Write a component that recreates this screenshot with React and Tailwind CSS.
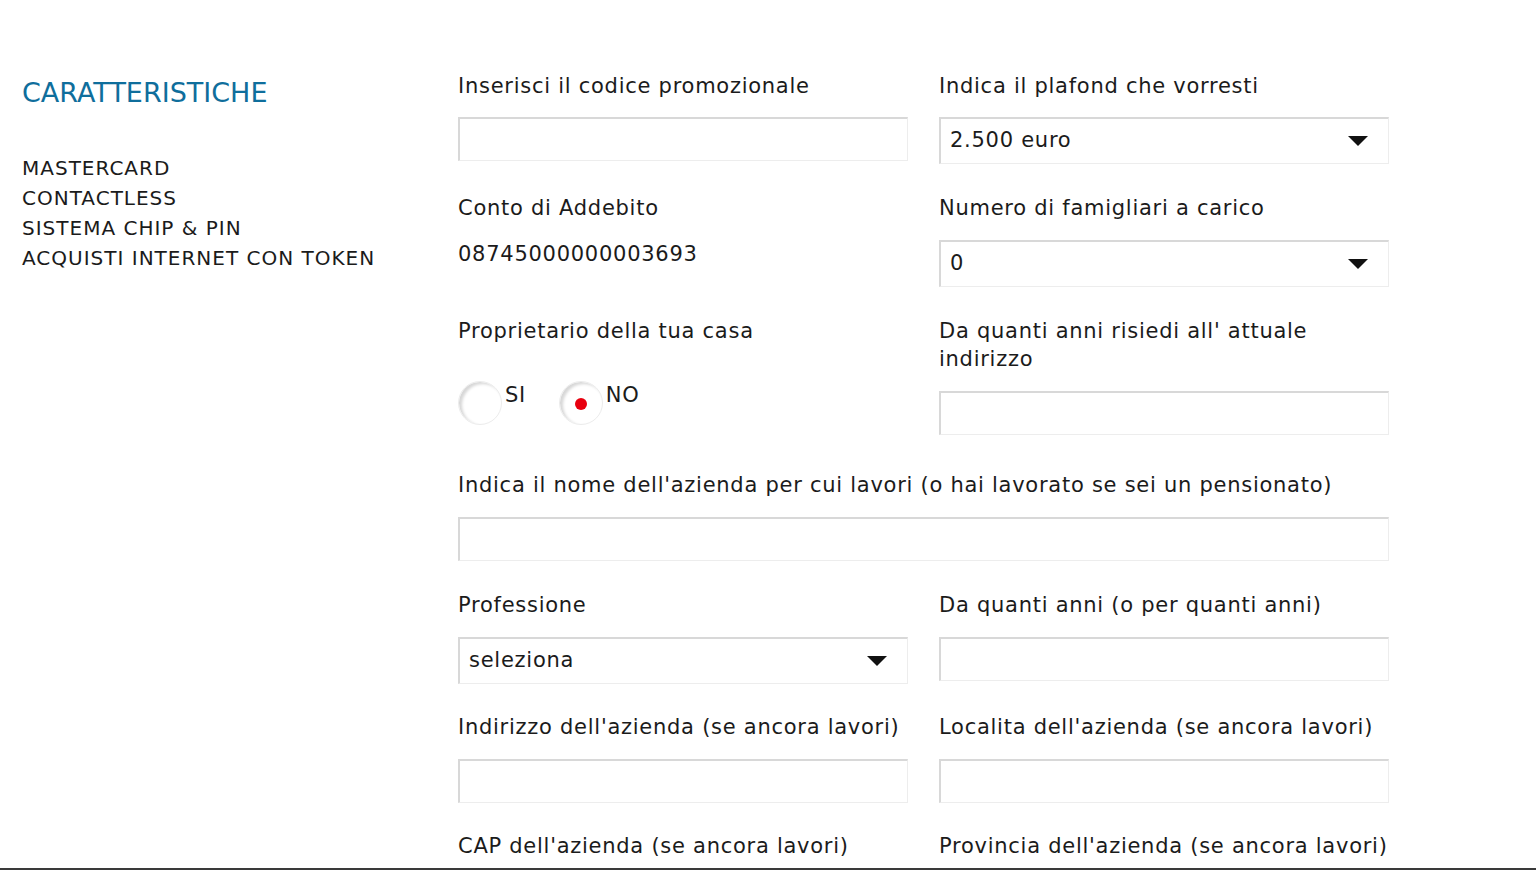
import React from "react";

const font = { fontFamily: '"DejaVu Sans", Verdana, sans-serif' };

function Label({ children, className = "" }) {
  return (
    <div className={`whitespace-nowrap text-[21px] leading-[28px] tracking-[0.035em] text-[#1b1b1b] ${className}`}>
      {children}
    </div>
  );
}

function TextBox({ className = "" }) {
  return (
    <div
      className={`h-[44px] bg-white border-t-2 border-l-2 border-r border-b border-t-[#d8d8d8] border-l-[#d8d8d8] border-r-[#ededed] border-b-[#ededed] ${className}`}
    />
  );
}

function SelectBox({ value }) {
  return (
    <div className="h-[47px] flex items-center justify-between pl-[9px] pr-[20px] bg-white border-t-2 border-l-2 border-r border-b border-t-[#d8d8d8] border-l-[#d8d8d8] border-r-[#ededed] border-b-[#ededed]">
      <span className="text-[21px] tracking-[0.035em] text-[#1b1b1b]">{value}</span>
      <svg width="20" height="10" viewBox="0 0 20 10">
        <path d="M0 0H20L10 10Z" fill="#111" />
      </svg>
    </div>
  );
}

function Radio({ label, checked }) {
  return (
    <div className="flex items-start">
      <div className="w-[44px] h-[44px] rounded-full bg-white border border-[#ececec] shadow-[inset_3px_2px_3px_rgba(0,0,0,0.16)] flex items-center justify-center">
        {checked && <div className="w-[12px] h-[12px] rounded-full bg-[#e8000f] translate-y-[1px]" />}
      </div>
      <span className="ml-[3px] text-[21px] leading-[28px] tracking-[0.03em] text-[#1b1b1b]">{label}</span>
    </div>
  );
}

export default function App() {
  return (
    <div className="h-[872px] w-full bg-white flex flex-col overflow-hidden" style={font}>
      <div className="flex-1 flex overflow-hidden">
        <aside className="w-[458px] shrink-0 pl-[22px] pt-[77px]">
          <h2 className="text-[27px] leading-[32px] text-[#0f6e9c]">CARATTERISTICHE</h2>
          <ul className="mt-[44px] text-[20px] leading-[30px] tracking-[0.05em] text-[#1b1b1b]">
            <li>MASTERCARD</li>
            <li>CONTACTLESS</li>
            <li>SISTEMA CHIP &amp; PIN</li>
            <li>ACQUISTI INTERNET CON TOKEN</li>
          </ul>
        </aside>

        <main className="w-[931px] pt-[72px]">
          <div className="grid grid-cols-[450px_450px] gap-x-[31px]">
            <div>
              <Label>Inserisci il codice promozionale</Label>
              <TextBox className="mt-[17px]" />
            </div>
            <div>
              <Label>Indica il plafond che vorresti</Label>
              <div className="mt-[17px]">
                <SelectBox value="2.500 euro" />
              </div>
            </div>
          </div>

          <div className="grid grid-cols-[450px_450px] gap-x-[31px] mt-[30px]">
            <div>
              <Label>Conto di Addebito</Label>
              <div className="mt-[18px] text-[21px] leading-[28px] tracking-[0.035em] text-[#1b1b1b]">08745000000003693</div>
            </div>
            <div>
              <Label>Numero di famigliari a carico</Label>
              <div className="mt-[18px]">
                <SelectBox value="0" />
              </div>
            </div>
          </div>

          <div className="grid grid-cols-[450px_450px] gap-x-[31px] mt-[30px]">
            <div>
              <Label>Proprietario della tua casa</Label>
              <div className="mt-[36px] flex gap-[33px]">
                <Radio label="SI" />
                <Radio label="NO" checked />
              </div>
            </div>
            <div>
              <Label>
                Da quanti anni risiedi all' attuale
                <br />
                indirizzo
              </Label>
              <TextBox className="mt-[18px]" />
            </div>
          </div>

          <div className="mt-[36px]">
            <Label>Indica il nome dell'azienda per cui lavori (o hai lavorato se sei un pensionato)</Label>
            <TextBox className="mt-[18px]" />
          </div>

          <div className="grid grid-cols-[450px_450px] gap-x-[31px] mt-[30px]">
            <div>
              <Label>Professione</Label>
              <div className="mt-[18px]">
                <SelectBox value="seleziona" />
              </div>
            </div>
            <div>
              <Label>Da quanti anni (o per quanti anni)</Label>
              <TextBox className="mt-[18px]" />
            </div>
          </div>

          <div className="grid grid-cols-[450px_450px] gap-x-[31px] mt-[29px]">
            <div>
              <Label>Indirizzo dell'azienda (se ancora lavori)</Label>
              <TextBox className="mt-[18px]" />
            </div>
            <div>
              <Label>Localita dell'azienda (se ancora lavori)</Label>
              <TextBox className="mt-[18px]" />
            </div>
          </div>

          <div className="grid grid-cols-[450px_450px] gap-x-[31px] mt-[29px]">
            <Label>CAP dell'azienda (se ancora lavori)</Label>
            <Label>Provincia dell'azienda (se ancora lavori)</Label>
          </div>
        </main>
      </div>
      <div className="h-[2px] bg-[#3a3a3a] shrink-0" />
      <div className="h-[2px] shrink-0" />
    </div>
  );
}
